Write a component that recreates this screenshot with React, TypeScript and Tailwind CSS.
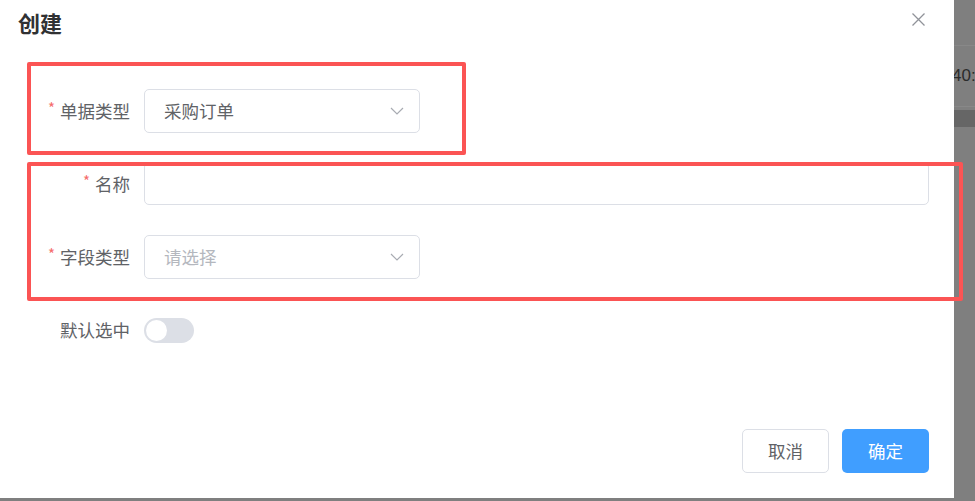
const cjk = { fontFamily: '"Noto Sans CJK SC", "Liberation Sans", sans-serif' }

function Chevron() {
  return (
    <svg width="16" height="16" viewBox="0 0 16 16" fill="none">
      <polyline points="2,5 8,11 14,5" stroke="#a8abb2" strokeWidth="1.2" />
    </svg>
  )
}

function Label({ text, required }: { text: string; required?: boolean }) {
  return (
    <div className="w-[119px] shrink-0 pr-[14px] flex items-center justify-end text-[17.5px] text-[#606266]">
      {required && <span className="text-[#f56c6c] mr-[5px] text-[15px] -mt-[6px]">*</span>}
      {text}
    </div>
  )
}

function Select({ value, placeholder }: { value?: string; placeholder?: string }) {
  return (
    <div className="w-[276px] h-[44px] rounded-[5px] border border-[#dcdfe6] flex items-center justify-between pl-[19px] pr-[14px]">
      <span className={value ? 'text-[17.5px] text-[#606266]' : 'text-[17.5px] text-[#b4b7be]'}>
        {value ?? placeholder}
      </span>
      <Chevron />
    </div>
  )
}

export default function App() {
  return (
    <div className="w-[975px] h-[501px] relative overflow-hidden bg-[#7f7f7f] flex" style={cjk}>
      {/* Dialog */}
      <div className="w-[954px] h-[498px] shrink-0 bg-white flex flex-col relative">
        <div className="flex items-center justify-between h-[47px] pl-[18px] pr-[29px]">
          <h2 className="text-[22px] font-bold text-[#303133] leading-none -mt-[4px]">创建</h2>
          <svg className="-mt-[8px]" width="13" height="13" viewBox="0 0 13 13" fill="none">
            <path d="M0.5 0.5 L12.5 12.5 M12.5 0.5 L0.5 12.5" stroke="#909399" strokeWidth="1.3" />
          </svg>
        </div>

        <div className="flex flex-col gap-[29px] pt-[42px] pl-[25px] pr-[25px]">
          <div className="flex h-[44px]">
            <Label text="单据类型" required />
            <Select value="采购订单" />
          </div>
          <div className="flex h-[44px]">
            <Label text="名称" required />
            <div className="flex-1 h-[43px] rounded-[5px] border border-[#dcdfe6]" />
          </div>
          <div className="flex h-[44px]">
            <Label text="字段类型" required />
            <Select placeholder="请选择" />
          </div>
          <div className="flex h-[44px] items-center">
            <Label text="默认选中" />
            <div className="w-[50px] h-[25px] rounded-full bg-[#dcdfe6] flex items-center pl-[2px]">
              <div className="w-[21px] h-[21px] rounded-full bg-white" />
            </div>
          </div>
        </div>

        <div className="mt-auto flex justify-end gap-[13px] pr-[25px] pb-[25px]">
          <button className="w-[87px] h-[44px] rounded-[5px] border border-[#dcdfe6] bg-white text-[17.5px] text-[#606266]">
            取消
          </button>
          <button className="w-[87px] h-[44px] rounded-[5px] bg-[#409eff] text-[17.5px] text-white">
            确定
          </button>
        </div>
      </div>

      {/* Page behind the overlay */}
      <div className="flex-1 min-w-0 flex flex-col">
        <div className="h-[46px] border-b border-[#888]" />
        <div className="h-[61px] flex items-center border-b border-[#888]">
          <span className="text-[17px] text-[#2b2b2b] whitespace-nowrap -ml-[2px]" style={{ fontFamily: '"Liberation Sans", sans-serif' }}>
            40:
          </span>
        </div>
        <div className="h-[17px] mt-[3px] bg-[#666]" />
      </div>

      {/* Annotation boxes */}
      <div className="absolute left-[27px] top-[62px] w-[439px] h-[93px] border-[4px] border-[#fb5454] rounded-[2px]" />
      <div className="absolute left-[27px] top-[162px] w-[936px] h-[139px] border-[4px] border-[#fb5454] rounded-[2px]" />
    </div>
  )
}
